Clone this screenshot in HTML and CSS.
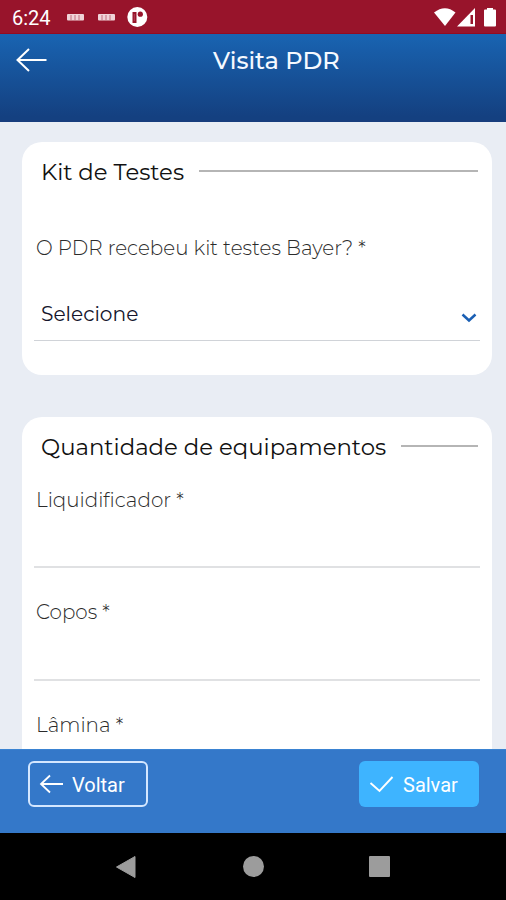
FILE: index.html
```html
<!DOCTYPE html>
<html lang="pt-BR">
<head>
<meta charset="utf-8">
<title>Visita PDR</title>
<link rel="stylesheet" href="styles.css">
</head>
<body>
<div class="phone">
  <div class="status">
    <span class="clock">6:24</span>
    <svg class="notices" width="82" height="22" viewBox="66 6 82 22">
      <g fill="#f0d3d8"><rect x="67" y="14" width="17" height="6.500" rx="1"/><rect x="98" y="14" width="17" height="6.500" rx="1"/></g>
      <path d="M71 15v5M75 15v5M79 15v5M102 15v5M106 15v5M110 15v5" stroke="#b35468" stroke-width=".8"/>
      <circle cx="137.300" cy="17" r="10" fill="#fff"/>
      <path d="M132.500 12h4v11h-4z" fill="#98142b"/>
      <path d="M134.300 14v7" stroke="#b9596d" stroke-width=".7"/>
      <circle cx="140.300" cy="14.200" r="2.600" fill="#98142b"/>
    </svg>
    <svg class="signals" width="64" height="22" viewBox="433 6 64 22" fill="#fff">
      <path d="M434 12.500Q445 4 455.500 12.500L445 26z"/>
      <path d="M475 8v18.500H457z"/>
      <path d="M470.500 15h2.500v9h-2.500z" fill="#98142b"/>
      <path d="M487 8h6v1.500h2q1 0 1 1v15q0 1-1 1h-10q-1 0-1-1v-15q0-1 1-1h2z"/>
    </svg>
  </div>
  <header class="header">
    <svg class="back" width="32" height="26" viewBox="0 0 32 26"><path d="M13 2L1.500 13 13 24M1.500 13h29" fill="none" stroke="#fff" stroke-width="2"/></svg>
    <h1 class="title">Visita PDR</h1>
  </header>
  <main class="content">
    <section class="card card-kit">
      <div class="heading"><h2>Kit de Testes</h2><span class="rule"></span></div>
      <label class="label question">O PDR recebeu kit testes Bayer? *</label>
      <div class="select">
        <span class="value">Selecione</span>
        <svg width="16" height="10" viewBox="0 0 16 10"><path d="M1.500 1.500L8 7.500l6.500-6" fill="none" stroke="#1a5fb4" stroke-width="2.500"/></svg>
      </div>
    </section>
    <section class="card card-equip">
      <div class="heading"><h2>Quantidade de equipamentos</h2><span class="rule"></span></div>
      <div class="field first"><label class="label">Liquidificador *</label></div>
      <div class="field"><label class="label">Copos *</label></div>
      <div class="field"><label class="label">Lâmina *</label></div>
    </section>
  </main>
  <footer class="actions">
    <button class="btn outline">
      <svg width="25" height="20" viewBox="0 0 25 20"><path d="M11 1.500L2 10l9 8.500M2 10h22" fill="none" stroke="#fff" stroke-width="1.800"/></svg>
      <span>Voltar</span>
    </button>
    <button class="btn solid">
      <svg width="25" height="20" viewBox="0 0 25 20"><path d="M1.500 9l9 8L23.500 3" fill="none" stroke="#fff" stroke-width="1.900"/></svg>
      <span>Salvar</span>
    </button>
  </footer>
  <nav class="navbar">
    <svg width="22" height="24" viewBox="0 0 22 24"><path d="M20 1.500v21L1.500 12z" fill="#9c9c9c" stroke="#9c9c9c" stroke-linejoin="round"/></svg>
    <span class="home"></span>
    <span class="recent"></span>
  </nav>
</div>
</body>
</html>
```
FILE: styles.css
```css
* { box-sizing: border-box; }
body { margin: 0; font-family: Montserrat, Inter, sans-serif; }
h1, h2 { margin: 0; font-weight: 400; white-space: nowrap; }
.phone { width: 506px; height: 900px; display: flex; flex-direction: column; overflow: hidden; }
.status { height: 34px; flex: none; background: #98142b; border-bottom: 1px solid #930b20; display: flex; align-items: center; padding: 0 9px 0 12px; }
.clock { width: 54px; font: 20px/34px Roboto, sans-serif; color: #fff; padding-top: 2px; }
.signals { margin-left: auto; }
.header { height: 88px; flex: none; background: linear-gradient(#1964b2, #144080 96%); border-bottom: 2px solid #173d7d; display: flex; padding: 0 14px 0 16px; }
.back { margin-top: 13px; }
.title { font-size: 24px; line-height: 30px; font-weight: 500; color: #f5f9ff; margin: 12px 0 0 165px; }
.content { flex: 1; min-height: 0; overflow: hidden; background: #e9edf4; padding: 20px 14px 0 22px; display: flex; flex-direction: column; gap: 42px; }
.card { flex: none; background: #fff; border-radius: 20px; padding: 0 12px; }
.card-kit { height: 233px; }
.card-equip { height: 420px; }
.heading { display: flex; align-items: center; gap: 15px; padding: 14px 2px 0 7px; height: 45px; }
.heading h2 { font-size: 22.8px; line-height: 30px; color: #111; flex: none; }
.rule { flex: 1; height: 2px; background: #b5b5b5; margin-top: -1px; }
.label { display: block; width: max-content; font-size: 19.9px; line-height: 24px; font-weight: 300; color: #2b2b2b; margin-left: 2px; }
.question { margin-top: 49px; }
.select { margin-top: 34px; height: 47px; border-bottom: 1px solid #d0d3d8; display: flex; justify-content: space-between; padding: 8px 3px 0 7px; }
.select svg { margin-top: 11px; }
.value { font-size: 20.2px; line-height: 24px; color: #15152c; }
.field { height: 112.5px; padding-top: 32px; border-bottom: 2px solid #e0e1e3; }
.first { height: 106px; padding-top: 26px; }
.actions { height: 84px; flex: none; background: #3478c9; border-top: 1px solid #3a83d2; display: flex; justify-content: space-between; padding: 11px 27px 0 28px; }
.btn { width: 120px; height: 46px; border: 0; border-radius: 6px; display: flex; align-items: center; font: 20px/24px Roboto, sans-serif; color: #fff; padding: 0 0 0 11px; gap: 8px; }
.btn span { padding-top: 1px; }
.outline { background: transparent; border: 2px solid #d4e7ff; padding-left: 9px; }
.solid { background: #3eb4ff; height: 46px; padding-left: 10px; gap: 9px; }
.navbar { height: 67px; flex: none; background: #000; display: flex; justify-content: space-between; align-items: center; padding: 0 116px 0 115px; }
.home { width: 21px; height: 21px; border-radius: 50%; background: #9c9c9c; }
.recent { width: 21px; height: 21px; border-radius: 1px; background: #9c9c9c; }
```
